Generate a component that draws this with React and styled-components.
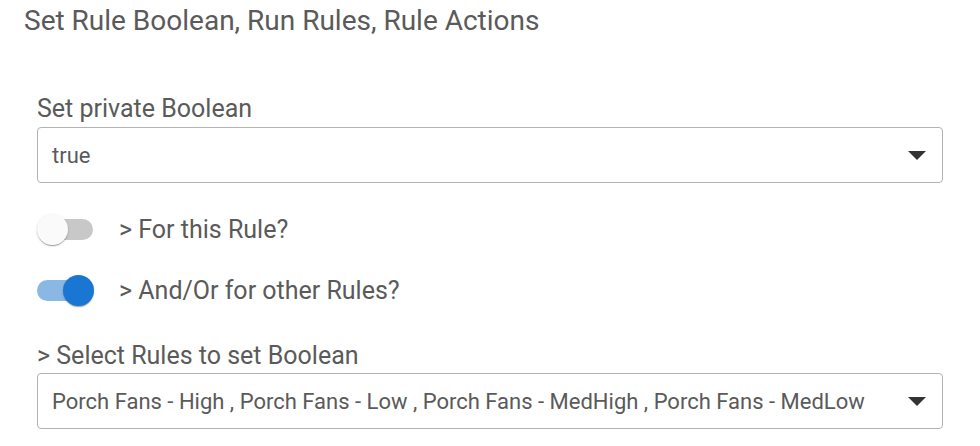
import React, { useState } from "react";
import styled, { createGlobalStyle } from "styled-components";

const GlobalStyle = createGlobalStyle`
  body {
    margin: 0;
    background: #fff;
    font-family: Roboto, "Liberation Sans", sans-serif;
    color: #5a5a5a;
  }
`;

const Page = styled.div`
  padding: 4px 37px 0 24px;
`;

const Title = styled.h2`
  margin: 0;
  font-size: 28px;
  font-weight: 400;
  line-height: 34px;
  color: #5a5a5a;
`;

const Form = styled.div`
  display: flex;
  flex-direction: column;
  padding-left: 13px;
  margin-top: 56px;
`;

const Label = styled.div`
  font-size: 25px;
  line-height: 30px;
  margin-top: ${(p) => p.$gap || 0}px;
  color: #5a5a5a;
`;

const SelectBox = styled.div`
  display: flex;
  align-items: center;
  justify-content: space-between;
  height: 56px;
  box-sizing: border-box;
  margin-top: ${(p) => p.$gap || 0}px;
  padding: 0 16px 0 14px;
  border: 1px solid #b3b3b3;
  border-radius: 4px;
  font-size: 22px;
  color: #5a5a5a;
`;

const Caret = styled.span`
  width: 0;
  height: 0;
  border-left: 9px solid transparent;
  border-right: 9px solid transparent;
  border-top: 9px solid #333;
`;

const Switches = styled.div`
  display: flex;
  flex-direction: column;
  margin-top: 16px;
`;

const SwitchRow = styled.label`
  display: flex;
  align-items: center;
  height: 61px;
  gap: 26px;
  font-size: 25px;
  color: #5a5a5a;
  cursor: pointer;
`;

const Track = styled.span`
  position: relative;
  width: 56px;
  height: 21px;
  border-radius: 11px;
  background: ${(p) => (p.$on ? "#8ab7e3" : "#c8c8c8")};
`;

const Thumb = styled.span`
  position: absolute;
  top: -5px;
  left: ${(p) => (p.$on ? "26px" : "0")};
  width: 31px;
  height: 31px;
  border-radius: 50%;
  background: ${(p) => (p.$on ? "#1976d2" : "#fafafa")};
  box-shadow: 0 2px 1px -1px rgba(0, 0, 0, 0.2), 0 1px 1px 0 rgba(0, 0, 0, 0.14),
    0 1px 3px 0 rgba(0, 0, 0, 0.12);
`;

const Switch = ({ on, onToggle, children }) => (
  <SwitchRow onClick={onToggle}>
    <Track $on={on}>
      <Thumb $on={on} />
    </Track>
    {children}
  </SwitchRow>
);

const App = () => {
  const [thisRule, setThisRule] = useState(false);
  const [otherRules, setOtherRules] = useState(true);

  return (
    <Page>
      <GlobalStyle />
      <Title>Set Rule Boolean, Run Rules, Rule Actions</Title>
      <Form>
        <Label>Set private Boolean</Label>
        <SelectBox $gap={3}>
          <span>true</span>
          <Caret />
        </SelectBox>
        <Switches>
          <Switch on={thisRule} onToggle={() => setThisRule(!thisRule)}>
            &gt; For this Rule?
          </Switch>
          <Switch on={otherRules} onToggle={() => setOtherRules(!otherRules)}>
            &gt; And/Or for other Rules?
          </Switch>
        </Switches>
        <Label $gap={20}>&gt; Select Rules to set Boolean</Label>
        <SelectBox $gap={2}>
          <span>
            Porch Fans - High , Porch Fans - Low , Porch Fans - MedHigh , Porch Fans - MedLow
          </span>
          <Caret />
        </SelectBox>
      </Form>
    </Page>
  );
};

export default App;
